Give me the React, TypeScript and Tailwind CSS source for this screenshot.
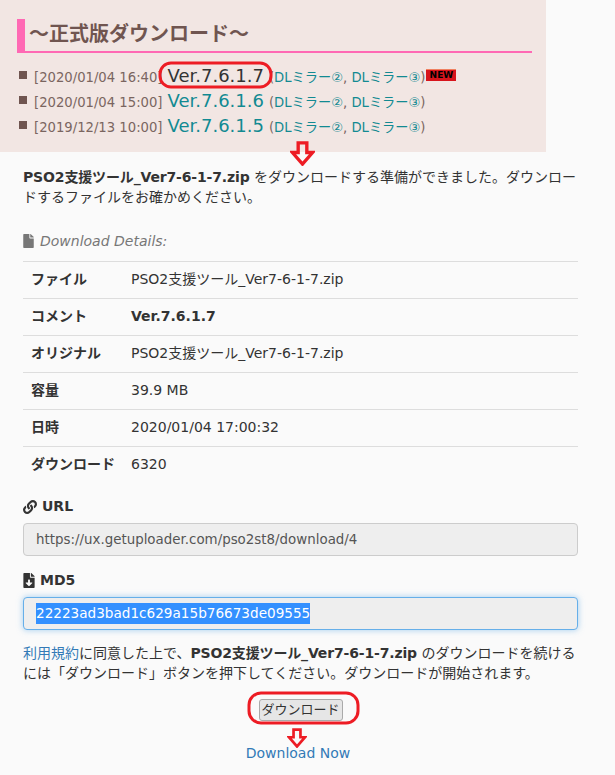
import React from 'react';
import { FaFile, FaLink, FaFileDownload } from 'react-icons/fa';

const font = "font-['DejaVu_Sans','Noto_Sans_CJK_JP',sans-serif]";

const releases = [
  { date: '[2020/01/04 16:40]', ver: 'Ver.7.6.1.7', isNew: true },
  { date: '[2020/01/04 15:00]', ver: 'Ver.7.6.1.6', isNew: false },
  { date: '[2019/12/13 10:00]', ver: 'Ver.7.6.1.5', isNew: false },
];

const details: { label: string; value: string; bold?: boolean }[] = [
  { label: 'ファイル', value: 'PSO2支援ツール_Ver7-6-1-7.zip' },
  { label: 'コメント', value: 'Ver.7.6.1.7', bold: true },
  { label: 'オリジナル', value: 'PSO2支援ツール_Ver7-6-1-7.zip' },
  { label: '容量', value: '39.9 MB' },
  { label: '日時', value: '2020/01/04 17:00:32' },
  { label: 'ダウンロード', value: '6320' },
];

const DownArrow = ({ className, size }: { className: string; size: number }) => (
  <svg className={className} width={size} height={size} viewBox="0 0 26 26" fill="none" stroke="#ed1c24" strokeWidth="3.500">
    <path d="M8.500 2H17.500V12H23.500L13 24L2.500 12H8.500Z" />
  </svg>
);

export default function App() {
  return (
    <div className={`relative w-[615px] h-[775px] overflow-hidden bg-[#fafafa] text-[#333] ${font}`}>
      {/* Release list */}
      <div className="w-[546px] h-[152px] bg-[#f2e6e3] pt-[19px] pl-[17px] pr-[14px]">
        <h2 className="h-[34px] border-l-[8px] border-b-[2px] border-[#ff69b4] pl-[4px] text-[20px] leading-[31px] font-bold text-[#705550]">
          ～正式版ダウンロード～
        </h2>
        <ul className="mt-[9px] flex flex-col">
          {releases.map((r) => (
            <li key={r.ver} className="flex items-baseline h-[25px] text-[13.2px] text-[#7a6560] whitespace-nowrap">
              <span className="w-[8px] h-[8px] bg-[#705550] ml-[2px] mr-[7px] self-center" />
              <span>{r.date}</span>
              <span className={`ml-[5px] text-[18px] ${r.isNew ? 'text-[#333]' : 'text-[#128a92]'}`}>{r.ver}</span>
              <span className="ml-[5px]">(</span>
              <span className="text-[#128a92]">DLミラー②</span>
              <span>,&nbsp;</span>
              <span className="text-[#128a92]">DLミラー③</span>
              <span>)</span>
              {r.isNew && (
                <span className="ml-[1px] self-center w-[30px] h-[12px] bg-[#d8141c] border-t border-[#f08060] text-[9px] leading-[10px] font-bold text-black text-center">
                  NEW
                </span>
              )}
            </li>
          ))}
        </ul>
      </div>

      {/* Download details */}
      <div className="pl-[23px] pr-[37px] pt-[15px] text-[14px]">
        <p className="leading-[20px]">
          <b className="tracking-[-0.15px]">PSO2支援ツール_Ver7-6-1-7.zip</b> をダウンロードする準備ができました。ダウンロードするファイルをお確かめください。
        </p>
        <div className="mt-[24px] flex items-center gap-[6px] leading-[20px] italic text-[#777]">
          <FaFile className="w-[11px] h-[14px]" />
          Download Details:
        </div>
        <table className="mt-[10px] w-full">
          <tbody>
            {details.map((d) => (
              <tr key={d.label} className="h-[37px] border-t border-[#ddd]">
                <th className="w-[108px] pl-[8px] pb-[2px] text-left font-bold whitespace-nowrap">{d.label}</th>
                <td className={`pb-[2px] whitespace-nowrap ${d.bold ? 'font-bold' : ''}`}>{d.value}</td>
              </tr>
            ))}
          </tbody>
        </table>

        <div className="mt-[13px] flex items-center gap-[5px] h-[20px] font-bold">
          <FaLink className="w-[14px] h-[14px]" />
          URL
        </div>
        <div className="mt-[6px] h-[33px] rounded-[4px] border border-[#ccc] bg-[#eee] px-[12px] text-[13.4px] leading-[31px] text-[#555]">
          https://ux.getuploader.com/pso2st8/download/4
        </div>

        <div className="mt-[15px] flex items-center gap-[5px] h-[20px] font-bold">
          <FaFileDownload className="w-[12px] h-[15px]" />
          MD5
        </div>
        <div className="mt-[6px] h-[33px] rounded-[4px] border border-[#66afe9] bg-[#eee] px-[12px] text-[13.6px] leading-[31px] text-white shadow-[0_0_6px_rgba(102,175,233,0.6)]">
          <span className="inline-block h-[21px] leading-[21px] bg-[#3390ff]">22223ad3bad1c629a15b76673de09555</span>
        </div>

        <p className="mt-[13px] leading-[20px]">
          <span className="text-[#337ab7]">利用規約</span>に同意した上で、<b className="tracking-[-0.15px]">PSO2支援ツール_Ver7-6-1-7.zip</b> のダウンロードを続けるには「ダウンロード」ボタンを押下してください。ダウンロードが開始されます。
        </p>

        <div className="mt-[16px] flex flex-col items-center">
          <button className="h-[22px] w-[84px] rounded-[3px] border border-[#aaa] bg-[#e6e6e6] text-[13px] leading-[20px] text-[#333]">
            ダウンロード
          </button>
          <a className="mt-[22px] pr-[5px] leading-[20px] text-[#337ab7]">Download Now</a>
        </div>
      </div>

      {/* Red annotations over the capture */}
      <svg className="absolute left-[0px] top-[0px] pointer-events-none" width="615" height="775" fill="none" stroke="#ed1c24" strokeWidth="3">
        <rect x="160" y="63" width="111" height="24" rx="11" />
        <rect x="249" y="693" width="109" height="30" rx="12" />
      </svg>
      <DownArrow className="absolute left-[290px] top-[141px]" size={25} />
      <DownArrow className="absolute left-[287px] top-[728px]" size={20} />
    </div>
  );
}
